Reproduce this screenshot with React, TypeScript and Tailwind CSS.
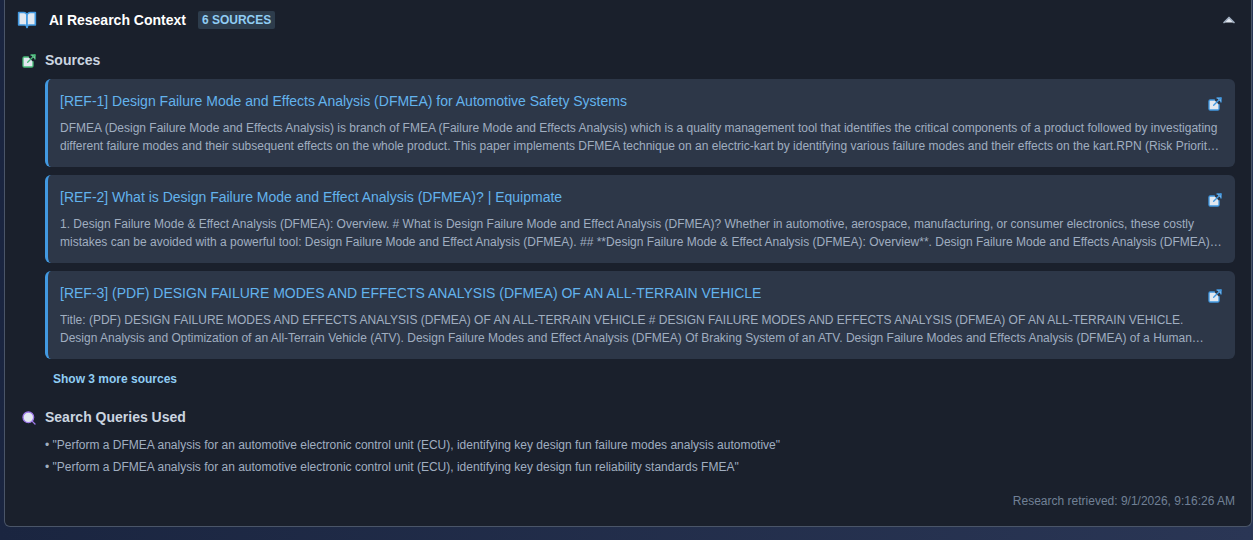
import { useState } from 'react';
import type { ReactNode } from 'react';
import { FiBookOpen, FiChevronUp, FiExternalLink, FiSearch } from 'react-icons/fi';

interface Source {
  title: string;
  url: string;
  snippet: string;
}

const SOURCES: Source[] = [
  {
    title: '[REF-1] Design Failure Mode and Effects Analysis (DFMEA) for Automotive Safety Systems',
    url: '#ref-1',
    snippet:
      'DFMEA (Design Failure Mode and Effects Analysis) is branch of FMEA (Failure Mode and Effects Analysis) which is a quality management tool that identifies the critical components of a product followed by investigating different failure modes and their subsequent effects on the whole product. This paper implements DFMEA technique on an electric-kart by identifying various failure modes and their effects on the kart.RPN (Risk Priorit…',
  },
  {
    title: '[REF-2] What is Design Failure Mode and Effect Analysis (DFMEA)? | Equipmate',
    url: '#ref-2',
    snippet:
      '1. Design Failure Mode & Effect Analysis (DFMEA): Overview. # What is Design Failure Mode and Effect Analysis (DFMEA)? Whether in automotive, aerospace, manufacturing, or consumer electronics, these costly mistakes can be avoided with a powerful tool: Design Failure Mode and Effect Analysis (DFMEA). ## **Design Failure Mode & Effect Analysis (DFMEA): Overview**. Design Failure Mode and Effects Analysis (DFMEA)…',
  },
  {
    title: '[REF-3] (PDF) DESIGN FAILURE MODES AND EFFECTS ANALYSIS (DFMEA) OF AN ALL-TERRAIN VEHICLE',
    url: '#ref-3',
    snippet:
      'Title: (PDF) DESIGN FAILURE MODES AND EFFECTS ANALYSIS (DFMEA) OF AN ALL-TERRAIN VEHICLE # DESIGN FAILURE MODES AND EFFECTS ANALYSIS (DFMEA) OF AN ALL-TERRAIN VEHICLE. Design Analysis and Optimization of an All-Terrain Vehicle (ATV). Design Failure Modes and Effect Analysis (DFMEA) Of Braking System of an ATV. Design Failure Modes and Effects Analysis (DFMEA) of a Human…',
  },
];

const QUERIES = [
  'Perform a DFMEA analysis for an automotive electronic control unit (ECU), identifying key design fun failure modes analysis automotive',
  'Perform a DFMEA analysis for an automotive electronic control unit (ECU), identifying key design fun reliability standards FMEA',
];

export default function App() {
  const [open, setOpen] = useState(true);

  return (
    <div className="min-h-screen bg-linear-to-r from-[#1a2540] to-[#2a3655] pr-px pb-3 pl-1 font-['Liberation_Sans',Arial,sans-serif]">
      <section className="rounded-b-md border-x border-b border-[#4a5568] bg-[#1a202c] pb-4">
        <button
          type="button"
          onClick={() => setOpen(!open)}
          aria-expanded={open}
          className="flex h-10 w-full items-center px-3 text-left"
        >
          <FiBookOpen className="h-5 w-5 fill-[#e2e8f0] text-[#4299e1]" />
          <span className="ml-3 text-sm leading-[22px] font-bold text-white">AI Research Context</span>
          <span className="ml-3 rounded-xs bg-[#2d3c4c] px-1 text-xs leading-[18px] font-bold text-[#90cdf4] uppercase">
            6 sources
          </span>
          <FiChevronUp className="ml-auto h-5 w-5 fill-[#e2e8f0] text-[#a0aec0]" />
        </button>

        {open && (
          <div className="px-4 pt-2.5">
            <SectionHeading icon={<FiExternalLink className="h-4 w-4 fill-[#e2e8f0] text-[#48bb78]" />}>
              Sources
            </SectionHeading>
            <div className="mt-2 flex flex-col gap-2 pl-6">
              {SOURCES.map((source) => (
                <SourceCard key={source.url} source={source} />
              ))}
            </div>
            <button
              type="button"
              className="mt-2 ml-6 h-6 px-2 text-xs font-bold text-[#90cdf4] hover:underline"
            >
              Show 3 more sources
            </button>

            <div className="mt-4">
              <SectionHeading icon={<FiSearch className="h-4 w-4 fill-[#e2e8f0] text-[#9f7aea]" />}>
                Search Queries Used
              </SectionHeading>
            </div>
            <ul className="mt-2 flex flex-col gap-1 pl-6 text-xs leading-[18px] text-[#a0aec0]">
              {QUERIES.map((query) => (
                <li key={query}>• "{query}"</li>
              ))}
            </ul>

            <p className="mt-4 text-right text-xs leading-[18px] text-[#718096]">
              Research retrieved: 9/1/2026, 9:16:26 AM
            </p>
          </div>
        )}
      </section>
    </div>
  );
}

function SectionHeading({ icon, children }: { icon: ReactNode; children: ReactNode }) {
  return (
    <div className="flex items-center gap-2">
      {icon}
      <h3 className="text-sm leading-[21px] font-bold text-[#cbd5e0]">{children}</h3>
    </div>
  );
}

function SourceCard({ source }: { source: Source }) {
  return (
    <article className="rounded-md border-l-3 border-[#4299e1] bg-[#2d3748] p-3">
      <div className="flex h-5 items-start justify-between gap-2">
        <a href={source.url} className="truncate text-sm text-[#63b3ed] hover:underline">
          {source.title}
        </a>
        <a
          href={source.url}
          aria-label="Open source"
          className="flex h-[26px] w-4 shrink-0 items-center justify-center"
        >
          <FiExternalLink className="h-4 w-4 fill-[#e2e8f0] text-[#4299e1]" />
        </a>
      </div>
      <p className="mt-2 line-clamp-2 text-xs leading-[18px] text-[#a0aec0]">{source.snippet}</p>
    </article>
  );
}
